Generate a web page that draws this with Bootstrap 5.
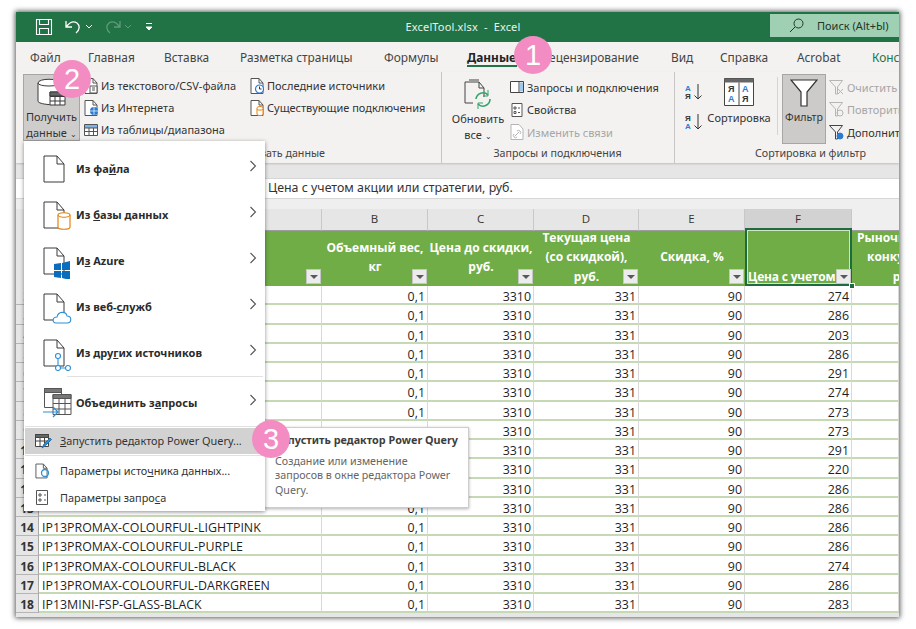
<!DOCTYPE html>
<html lang="ru">
<head>
<meta charset="utf-8">
<title>ExcelTool.xlsx - Excel</title>
<link href="https://cdn.jsdelivr.net/npm/bootstrap@5.3.0/dist/css/bootstrap.min.css" rel="stylesheet">
<style>
html,body{height:100%;background:#fff;overflow:hidden}
body{font-family:"Noto Sans","Liberation Sans",sans-serif;font-size:11px;color:#333;line-height:1.2}
svg{display:block;flex:none}
.xl-win{position:relative;width:883px;height:605px;margin:12px 0 0 16px;background:#e6e6e6;box-shadow:0 0 5px 1px rgba(0,0,0,.65);overflow:hidden}
.xl-title{height:30px;background:#217346;color:#fff;font-size:11px}
.qat{width:135px;padding-left:19px;gap:12px;flex:none}
.xl-name{padding-left:5px;white-space:nowrap;color:#e9f3ed;letter-spacing:.15px}
.xl-search{width:129px;height:23px;margin-top:-3px;background:#a0d0b4;color:#24352b;padding-left:19px;gap:13px;flex:none;white-space:nowrap}
.xl-tabs{height:30px;background:#f3f2f1;font-size:11.9px;color:#444}
.tab-i{flex:none;height:30px;white-space:nowrap;padding-top:8px}
.tw1{width:72px;padding-left:14px}.tw2{width:76px}.tw3{width:76px}.tw4{width:144px}.tw5{width:83px}.tw6{width:75px;font-weight:700;color:#222;position:relative}.tw7{width:129px}.tw8{width:49px}.tw9{width:77px}.tw10{width:75px}.tw11{width:40px;color:#217346}
.tw6::after{content:"";position:absolute;left:0;width:50px;top:23px;height:2px;background:#217346}
.xl-ribbon{height:91px;background:#f3f2f1;box-shadow:0 1px 2px rgba(0,0,0,.18);position:relative}
.rb-group{flex:none;height:91px;border-right:1px solid #c8c6c4;position:relative}
.g1{width:426px;padding-left:7px}.g2{width:233px;padding-left:9px}.g3{width:225px;padding-left:10px;border-right:0}
.rb-top{height:75px}
.rb-label{height:16px;text-align:center;color:#444;font-size:10.7px;white-space:nowrap}
.rb-big{flex:none;text-align:center;font-size:11px;color:#333;padding-top:3px}
.rb-big .cap{line-height:16px}
.rb-get{width:57px;height:67px;margin-top:2px;background:#cfcdcb;border:1px solid #a8a6a4}
.rb-get .cap{margin-top:1px}
.rb-upd{width:54px;margin-top:2px;padding-top:5px}
.rb-sort{width:64px;margin:2px 0 0 -2px;padding-top:4px}
.rb-filter{width:44px;height:70px;margin:2px 0 0 4px;background:#cdcbc9;border:1px solid #a8a6a4;padding-top:4px}
.rb-sep{width:1px;height:58px;background:#d6d4d2;margin:5px 0 0 6px;flex:none}
.rb-list{padding-top:3px;flex:none}
.rb-li{height:22.5px;gap:3px;white-space:nowrap;color:#333;font-size:11px}
.rb-list.c1 .rb-li,.rb-list.c2 .rb-li{height:22px}
.rb-off{color:#a6a6a6}
.c1{width:165px;margin-left:4px}.c2{margin-left:1px}.c3{margin-left:5px;width:165px;padding-top:4px}.c4{width:24px;padding-top:11px}.c5{margin-left:3px;padding-top:4px}
.rb-gray-gap{height:15px;background:#e6e6e6}
.xl-fx{height:21px;background:#fff;font-size:12.4px;padding-left:252px;color:#333;border-bottom:1px solid #d6d6d6;border-top:1px solid #d6d6d6}
.fx-gap{height:10px;background:#efefef}
.sh-row{display:grid;grid-template-columns:23px 283px 106px 106px 105px 106px 107px 47px;font-family:"Open Sans","Liberation Sans",sans-serif}
.sh-letters{height:19px;background:#efefef;font-size:11.5px;color:#333;text-align:center;line-height:20px}
.sh-letters div{background:#e6e6e6;border-right:1px solid #c8c8c8;border-bottom:1px solid #9d9d9d}
.sh-letters .sel{background:#d2d2d2;border-bottom:2px solid #217346}
.sh-letters .blank{background:#efefef;border-right:0}
.sh-head{height:58px;background:#70ad47;color:#fff;font-weight:700;font-size:12px;line-height:19.2px;text-align:center}
.sh-head>div{position:relative;display:flex;align-items:center;justify-content:center;white-space:nowrap;overflow:visible}
.sh-head .rh{background:#e6e6e6}
.flt{position:absolute;right:1px;bottom:2px;width:15px;height:15px;background:#ececec;border:1px solid #c6c6c6}
.flt::after{content:"";position:absolute;left:3px;top:5px;border:4px solid transparent;border-top:4px solid #595959;border-bottom:0}
.sh-sel{outline:2px solid #1e6b41;outline-offset:-2px;box-shadow:inset 0 0 0 3px #cfe4c0;justify-content:flex-start!important;align-items:flex-end!important;padding-left:3px;letter-spacing:-.2px}
.sh-sel-h{position:absolute;right:-3px;bottom:-3px;width:6px;height:6px;background:#1e6b41;border:1px solid #fff;z-index:2}
.sh-next{justify-content:flex-start!important;padding-left:5px}
.sh-body{height:19.25px;background:#fff;font-size:12.4px;color:#1f1f1f;line-height:17px}
.sh-body>div{border-right:1px solid #d9d9d9;border-bottom:2px solid #c5dab4;text-align:right;padding:2px 2px 0 0;white-space:nowrap;overflow:hidden}
.sh-body .rh{background:#e6e6e6;font-weight:700;font-size:12px;text-align:center;border-bottom:1px solid #b5b5b5;border-right:1px solid #a8a8a8;padding:2px 0 0;color:#333}
.sh-body .tx{text-align:left;padding-left:3px}
.xl-menu{position:absolute;left:8px;top:129px;width:241px;height:370px;background:#fff;box-shadow:0 1px 4px rgba(0,0,0,.45);padding-top:5px;z-index:5}
.m-big{height:46px;padding-left:19px;font-weight:700;font-size:11px;color:#2b2b2b;position:relative;white-space:nowrap}
.m-big .m-tx{padding-left:1px}
.m-big .ic{width:32px;height:36px;flex:none}
.m-arr{position:absolute;left:225px;top:50%;margin-top:-9px}
.m-line{height:1px;background:#e1e1e1;margin:0 2px 3px 43px}
.m-line2{margin:0 2px 1px 1px}
.m-small{height:26px;padding-left:10px;gap:8px;font-size:10.9px;color:#333;white-space:nowrap}
.m-act{background:#d2d2d2;margin:1px 1px 1px}
.m-small2{height:27px;gap:9px}
.m-first{margin-top:1px}
.xl-tip{position:absolute;left:248px;top:415px;width:205px;height:81px;background:#fff;border:1px solid #cdcdcd;box-shadow:0 1px 3px rgba(0,0,0,.3);padding:5px 10px;z-index:4;color:#666;font-size:10.7px;line-height:14.5px}
.xl-tip b{display:block;color:#3d3d3d;font-size:10.8px;white-space:nowrap;margin-bottom:6px}
.pink{position:absolute;width:38px;height:38px;border-radius:50%;background:#f28cc2;color:#fff;font-size:29px;line-height:38px;text-align:center;font-family:"Liberation Sans",sans-serif;z-index:9}
.pk1{left:498px;top:24px}.pk2{left:37px;top:48px}.pk3{left:236px;top:408px}
</style>
</head>
<body>
<svg width="0" height="0" style="position:absolute">
<defs>
<symbol id="page" viewBox="0 0 22 28"><path d="M1 1h13l7 8v18H1z" fill="#fff" stroke="#3a3a3a" stroke-width="1"/><path d="M14 1v8h7" fill="none" stroke="#3a3a3a"/></symbol>
<symbol id="spage" viewBox="0 0 14 16"><path d="M1 .5h8l4 4.5v10.500H1z" fill="#fff" stroke="#555"/><path d="M9 .5V5h4" fill="none" stroke="#555"/></symbol>
<symbol id="chev" viewBox="0 0 8 12"><path d="M1.500 1l5 5-5 5" fill="none" stroke="#555" stroke-width="1.100"/></symbol>
</defs>
</svg>
<div class="xl-win">

<div class="xl-title d-flex align-items-center">
  <div class="qat d-flex align-items-center">
    <svg width="18" height="18" viewBox="0 0 18 18" fill="none" stroke="#fff" stroke-width="1.100"><path d="M1.500 1.500h15v15h-15z"/><path d="M4.500 1.500v5h9v-5M4.500 16.500v-6h9v6"/></svg>
    <svg width="28" height="16" viewBox="0 0 28 16" fill="none" stroke="#fff" stroke-width="1.300"><path d="M1 2v6h6M1.500 7.500C5 3 9 2 12 4c3 2.500 3 7-1 10"/><path d="M21 6l3 3 3-3" stroke-width="1"/></svg>
    <svg width="28" height="16" viewBox="0 0 28 16" fill="none" stroke="#5f9c7b" stroke-width="1.300"><path d="M15 2v6H9M14.500 7.500C11 3 7 2 4 4 1 6.500 1 11 5 14"/><path d="M20 6l3 3 3-3" stroke-width="1"/></svg>
    <svg width="8" height="10" viewBox="0 0 8 10" fill="none" stroke="#fff"><path d="M1 1.500h6"/><path d="M1 5h6l-3 3z" fill="#fff"/></svg>
  </div>
  <div class="xl-name flex-grow-1 text-center">ExcelTool.xlsx&nbsp; -&nbsp; Excel</div>
  <div class="xl-search d-flex align-items-center">
    <svg width="15" height="15" viewBox="0 0 15 15" fill="none" stroke="#24352b"><circle cx="9.500" cy="5.500" r="4.500"/><path d="M6 9l-5 5"/></svg>
    <span>Поиск (Alt+Ы)</span>
  </div>
</div>

<div class="xl-tabs d-flex">
  <div class="tab-i tw1">Файл</div><div class="tab-i tw2">Главная</div><div class="tab-i tw3">Вставка</div><div class="tab-i tw4">Разметка страницы</div><div class="tab-i tw5">Формулы</div><div class="tab-i tw6">Данные</div><div class="tab-i tw7">Рецензирование</div><div class="tab-i tw8">Вид</div><div class="tab-i tw9">Справка</div><div class="tab-i tw10">Acrobat</div><div class="tab-i tw11">Конструктор</div>
</div>

<div class="xl-ribbon d-flex">
  <div class="rb-group g1">
    <div class="rb-top d-flex">
      <div class="rb-big rb-get">
        <svg class="mx-auto" width="34" height="30" viewBox="0 0 34 30" fill="none" stroke="#3a3a3a"><path d="M3 5c0-5 22-5 22 0v18c0 3-8 4-12 3.500C8 26 3 25 3 23z" fill="#fff"/><path d="M3 5c0 4 22 4 22 0"/><path d="M15 14h15v13H15z" fill="#fff"/><path d="M15 18.500h15M15 23h15M20 14v13M25 14v13" /><path d="M15 14h15v4H15z" fill="#666"/></svg>
        <div class="cap">Получить<br>данные <span style="font-size:8px">&#8964;</span></div>
      </div>
      <div class="rb-list c1">
        <div class="rb-li d-flex align-items-center"><svg width="14" height="16"><use href="#spage"/><path d="M6 8h7v7H6z" fill="#fff" stroke="#555"/><path d="M8 10h3M8 12h3" stroke="#555"/></svg>Из текстового/CSV-файла</div>
        <div class="rb-li d-flex align-items-center"><svg width="14" height="16"><use href="#spage"/><circle cx="10" cy="11" r="4" fill="#2b7cd3"/><path d="M6 11h8M10 7v8" stroke="#fff" stroke-width=".7"/></svg>Из Интернета</div>
        <div class="rb-li d-flex align-items-center"><svg width="14" height="14" viewBox="0 0 14 14" fill="#fff" stroke="#555"><path d="M.5 1.500h13v11H.5z"/><path d="M1 2h12v3H1z" fill="#7fb5e6" stroke="none"/><path d="M.5 5h13M.5 8.500h13M5 5v7.500M9.500 5v7.500"/></svg>Из таблицы/диапазона</div>
      </div>
      <div class="rb-list c2">
        <div class="rb-li d-flex align-items-center"><svg width="14" height="16"><use href="#spage"/><circle cx="9.500" cy="11" r="4" fill="#fff" stroke="#2b7cd3" stroke-width="1.200"/><path d="M9.500 8.500V11h2" stroke="#333" fill="none"/></svg>Последние источники</div>
        <div class="rb-li d-flex align-items-center"><svg width="14" height="16"><use href="#spage"/><path d="M7 8c0-2 6-2 6 0v6c0 2-6 2-6 0z" fill="#fff" stroke="#e48312"/><path d="M7 9c0 1.500 6 1.500 6 0" fill="none" stroke="#e48312"/></svg>Существующие подключения</div>
      </div>
    </div>
    <div class="rb-label text-end" style="padding-right:116px">Получить и преобразовать данные</div>
  </div>
  <div class="rb-group g2">
    <div class="rb-top d-flex">
      <div class="rb-big rb-upd">
        <svg class="mx-auto" width="30" height="30" viewBox="0 0 30 30" fill="none"><path d="M2 3h14l5 6v9M2 3v21h8" stroke="#444"/><path d="M6 1h10M16 3v6h5" stroke="#444"/><path d="M13 20a7 7 0 0 1 12-4M27 20a7 7 0 0 1-12 5" stroke="#33a36b" stroke-width="1.600"/><path d="M25 11v6h-5M15 30v-6h5" stroke="#33a36b" stroke-width="1"/></svg>
        <div class="cap" style="margin-top:2px">Обновить<br>все <span style="font-size:8px">&#8964;</span></div>
      </div>
      <div class="rb-list c3">
        <div class="rb-li d-flex align-items-center"><svg width="14" height="14" viewBox="0 0 14 14" fill="none" stroke="#444"><path d="M.5 1.500h13v11H.5z" fill="#fff"/><path d="M10 2.500h3v9h-3z" fill="#9ec7ea" stroke="none"/><path d="M9 1.500v11"/></svg>Запросы и подключения</div>
        <div class="rb-li d-flex align-items-center"><svg width="14" height="14" viewBox="0 0 14 14" fill="none" stroke="#555"><path d="M2 .5h10v13H2z" fill="#fff"/><path d="M4 4h2v2H4zM4 8.500h2v2H4zM8 5h2M8 9.500h2"/></svg>Свойства</div>
        <div class="rb-li d-flex align-items-center rb-off"><svg width="14" height="16"><path d="M1 .5h8l4 4.500v10.500H1z" fill="#fff" stroke="#b5b5b5"/><path d="M5 12l4-4M4 10a2 2 0 0 0 3 3M7 7a2 2 0 0 1 3 3" fill="none" stroke="#b5b5b5"/></svg>Изменить связи</div>
      </div>
    </div>
    <div class="rb-label" style="padding-right:10px">Запросы и подключения</div>
  </div>
  <div class="rb-group g3">
    <div class="rb-top d-flex">
      <div class="rb-list c4">
        <svg width="18" height="18" viewBox="0 0 18 18" font-size="8" font-weight="700" font-family="Liberation Sans"><text x="0" y="8" fill="#2b7cd3">А</text><text x="0" y="16" fill="#333">Я</text><path d="M13 1v15M9.500 12.500L13 16l3.500-3.500" fill="none" stroke="#333"/></svg>
        <svg class="sort-za" style="margin-top:12px" width="18" height="18" viewBox="0 0 18 18" font-size="8" font-weight="700" font-family="Liberation Sans"><text x="0" y="8" fill="#333">Я</text><text x="0" y="16" fill="#2b7cd3">А</text><path d="M13 1v15M9.500 12.500L13 16l3.500-3.500" fill="none" stroke="#333"/></svg>
      </div>
      <div class="rb-big rb-sort">
        <svg class="mx-auto" width="30" height="28" viewBox="0 0 30 28" font-size="9" font-weight="700" font-family="Liberation Sans"><path d="M.5.500h29v27H.5z" fill="#fff" stroke="#444"/><path d="M.5.500h29v4H.5z" fill="#666"/><path d="M15 4.500v23" stroke="#444"/><text x="4" y="14" fill="#333">Я</text><text x="18" y="14" fill="#2b7cd3">А</text><text x="4" y="24" fill="#2b7cd3">А</text><text x="18" y="24" fill="#333">Я</text></svg>
        <div style="margin-top:5px">Сортировка</div>
      </div>
      <div class="rb-sep"></div>
      <div class="rb-big rb-filter">
        <svg class="mx-auto" width="28" height="28" viewBox="0 0 28 28" fill="#fff" stroke="#333" stroke-width="1.200"><path d="M1 1h26L17 13v14h-6V13z"/></svg>
        <div style="margin-top:4px;font-size:10.6px">Фильтр</div>
      </div>
      <div class="rb-list c5">
        <div class="rb-li d-flex align-items-center rb-off"><svg width="15" height="15" viewBox="0 0 15 15" fill="none" stroke="#b5b5b5"><path d="M.5.500h13L8.500 7v7h-2V7z"/><path d="M9 9l5 5M14 9l-5 5"/></svg>Очистить</div>
        <div class="rb-li d-flex align-items-center rb-off"><svg width="15" height="15" viewBox="0 0 15 15" fill="none" stroke="#b5b5b5"><path d="M.5.500h13L8.500 7v7h-2V7z"/><circle cx="11" cy="11" r="3"/></svg>Повторить</div>
        <div class="rb-li d-flex align-items-center"><svg width="15" height="15" viewBox="0 0 15 15" fill="none" stroke="#444"><path d="M.5.500h13L8.500 7v7h-2V7z"/><circle cx="11" cy="11" r="3" fill="#2b7cd3" stroke="#2b7cd3"/></svg>Дополнительно</div>
      </div>
    </div>
    <div class="rb-label" style="padding-left:36px">Сортировка и фильтр</div>
  </div>
</div>
<div class="rb-gray-gap"></div>
<div class="xl-fx d-flex align-items-center">Цена с учетом акции или стратегии, руб.</div>
<div class="fx-gap"></div>

<div class="sh-row sh-letters"><div></div><div>A</div><div>B</div><div>C</div><div>D</div><div>E</div><div class="sel">F</div><div class="blank"></div></div>
<div class="sh-row sh-head">
  <div class="rh">1</div>
  <div><span class="flt"></span></div>
  <div>Объемный вес,<br>кг<span class="flt"></span></div>
  <div>Цена до скидки,<br>руб.<span class="flt"></span></div>
  <div>Текущая цена<br>(со скидкой),<br>руб.<span class="flt"></span></div>
  <div>Скидка, %<span class="flt"></span></div>
  <div class="sh-sel">Цена с учетом<span class="flt"></span><span class="sh-sel-h"></span></div>
  <div class="sh-next">Рыночная цена<br>конкурента,<br>руб.</div>
</div>
<div id="sheet-body"></div>

<div class="xl-menu">
  <div class="m-big d-flex align-items-center"><svg class="ic" width="32" height="36"><use href="#page" width="22" height="28" y="4"/></svg><span class="m-tx">Из фа<u>й</u>ла</span><svg class="m-arr" width="8" height="12"><use href="#chev"/></svg></div>
  <div class="m-big d-flex align-items-center"><svg class="ic" width="32" height="36"><use href="#page" width="22" height="28" y="4"/><path d="M15 18c0-3 12-3 12 0v12c0 3-12 3-12 0z" fill="#fff" stroke="#e48312" stroke-width="1.200"/><path d="M15 18c0 3 12 3 12 0" fill="none" stroke="#e48312"/></svg><span class="m-tx">Из <u>б</u>азы данных</span><svg class="m-arr" width="8" height="12"><use href="#chev"/></svg></div>
  <div class="m-big d-flex align-items-center"><svg class="ic" width="32" height="36"><use href="#page" width="22" height="28" y="4"/><path d="M11 21l7-1v7h-7zM19 20l8-2v9h-8zM11 28h7v7l-7-1zM19 28h8v9l-8-2z" fill="#0a6cbd"/></svg><span class="m-tx">И<u>з</u> Azure</span><svg class="m-arr" width="8" height="12"><use href="#chev"/></svg></div>
  <div class="m-big d-flex align-items-center"><svg class="ic" width="32" height="36"><use href="#page" width="22" height="28" y="4"/><path d="M13 34c-4 0-4-6 1-6 1-6 9-6 10-1 5 0 5 7 0 7z" fill="#fff" stroke="#2d8fd5" stroke-width="1.100"/></svg><span class="m-tx">Из веб-<u>с</u>лужб</span><svg class="m-arr" width="8" height="12"><use href="#chev"/></svg></div>
  <div class="m-big d-flex align-items-center"><svg class="ic" width="32" height="36"><use href="#page" width="22" height="28" y="4"/><g fill="#fff" stroke="#2d8fd5" stroke-width="1.100"><path d="M15 23v8M17 33h6"/><circle cx="15" cy="21" r="2.500"/><circle cx="15" cy="33" r="2.500"/><circle cx="25" cy="33" r="2.500"/></g></svg><span class="m-tx">Из дру<u>г</u>их источников</span><svg class="m-arr" width="8" height="12"><use href="#chev"/></svg></div>
  <div class="m-line"></div>
  <div class="m-big d-flex align-items-center"><svg class="ic" width="32" height="36" fill="#fff" stroke="#555"><path d="M1.500 3.500h17v19h-17z"/><path d="M1.500 3.500h17v4h-17z" fill="#777"/><path d="M10 9.500h18v20H10z"/><path d="M10 9.500h18v4H10z" fill="#777"/><path d="M10 18.500h18M10 24h18M16 13v16M22 13v16" fill="none"/><path d="M0 27h14M10 22l5 5-5 5" fill="none" stroke="#2d8fd5" stroke-width="1.200"/></svg><span class="m-tx">Объединить з<u>а</u>просы</span><svg class="m-arr" width="8" height="12"><use href="#chev"/></svg></div>
  <div class="m-line m-line2"></div>
  <div class="m-small m-act d-flex align-items-center"><svg width="17" height="15" viewBox="0 0 17 15" fill="none" stroke="#444"><path d="M.5.500h13v12H.5z" fill="#fff"/><path d="M.5.500h13v3H.5z" fill="#666"/><path d="M.5 7h13M5 3.500v9M9.500 3.500v9"/><path d="M7 14l2-4 6-6 1.500 1.500-6 6z" fill="#2d8fd5" stroke="#2d6ea5"/></svg><span><u>З</u>апустить редактор Power Query...</span></div>
  <div class="m-line m-line2"></div>
  <div class="m-small m-small2 m-first d-flex align-items-center"><svg width="17" height="16"><use href="#spage" x="1" width="13"/><circle cx="11" cy="10" r="3.500" fill="none" stroke="#2d8fd5" stroke-width="1.300"/></svg><span>Параметры исто<u>ч</u>ника данных...</span></div>
  <div class="m-small m-small2 d-flex align-items-center"><svg width="17" height="15" viewBox="0 0 17 15" fill="#fff" stroke="#555"><path d="M2.500.500h11v14h-11z"/><path d="M5 4h2v2H5zM5 9h2v2H5zM10 5h2M10 10h2" fill="none"/></svg><span>Параметры запро<u>с</u>а</span></div>
</div>

<div class="xl-tip"><b>Запустить редактор Power Query</b>Создание или изменение<br>запросов в окне редактора Power<br>Query.</div>

<div class="pink pk1">1</div>
<div class="pink pk2">2</div>
<div class="pink pk3">3</div>
</div>
<script>
var f=[274,286,203,286,291,274,273,273,291,220,286,286,286,286,274,286,283];
var a={14:'IP13PROMAX-COLOURFUL-LIGHTPINK',15:'IP13PROMAX-COLOURFUL-PURPLE',16:'IP13PROMAX-COLOURFUL-BLACK',17:'IP13PROMAX-COLOURFUL-DARKGREEN',18:'IP13MINI-FSP-GLASS-BLACK'};
var h='';
f.forEach(function(v,i){var n=i+2;h+='<div class="sh-row sh-body"><div class="rh">'+n+'</div><div class="tx">'+(a[n]||'')+'</div><div>0,1</div><div>3310</div><div>331</div><div>90</div><div>'+v+'</div><div></div></div>';});
document.getElementById('sheet-body').innerHTML=h;
</script>
<script src="https://cdn.jsdelivr.net/npm/bootstrap@5.3.0/dist/js/bootstrap.bundle.min.js"></script>
</body>
</html>
